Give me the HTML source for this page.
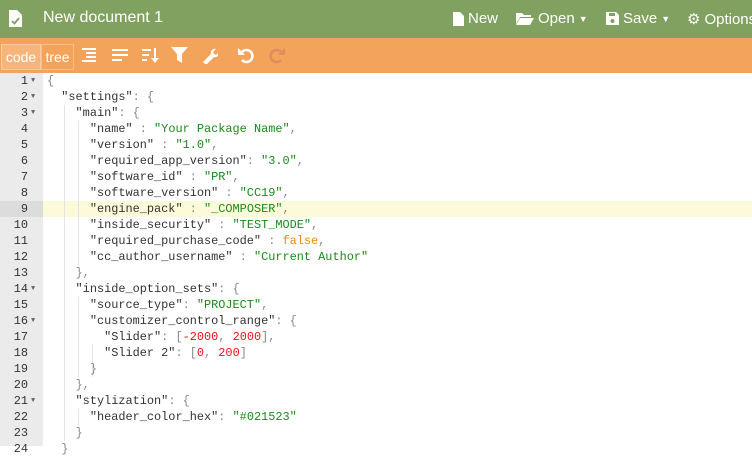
<!DOCTYPE html>
<html><head><meta charset="utf-8"><style>
*{margin:0;padding:0;box-sizing:border-box}
body{width:752px;height:446px;overflow:hidden;background:#fff;font-family:"Liberation Sans",sans-serif;position:relative}
#top{position:absolute;left:0;top:0;width:752px;height:38px;background:#80a160;color:#fff}
#top .t{position:absolute;left:43px;top:9px;font-size:16px}
#top .m{position:absolute;top:10px;font-size:15px;display:flex;align-items:center;gap:4px}
#tb{position:absolute;left:0;top:38px;width:752px;height:35px;background:#f3a35a}
.btn{position:absolute;top:6px;height:26px;border:1px solid rgba(255,255,255,.3);color:#fff;font-size:14px;line-height:24px;text-align:center}
#gut{position:absolute;left:0;top:73px;width:43px;height:373px;background:#ebebeb}
.code{position:absolute;left:0;top:73px;width:752px;font-family:"Liberation Mono",monospace;font-size:11.9px}
.ln{height:16px;line-height:16px;position:relative;white-space:pre;color:#333}
.ln .n{position:absolute;left:0;width:28px;text-align:right;color:#333}
.ln .f{position:absolute;left:31px;top:0;font-size:7px;color:#666}
.ln .c{position:absolute;left:47px}
.hl{background:linear-gradient(to right,#dcdcdc 0,#dcdcdc 43px,#fcfad9 43px)}
.s{color:#1a8a1a}.r{color:#e11}.o{color:#f08a00}.p{color:#888}
.g{position:absolute;width:1px;background:#e4e4e4}
</style></head><body>
<div id="top">
<svg style="position:absolute;left:9px;top:10px" width="13" height="17" viewBox="0 0 13 17"><path d="M0 0h8l5 5v12H0z" fill="#fff"/><path d="M3 11l2.5 2.5L10 8" stroke="#80a160" stroke-width="1.8" fill="none"/></svg>
<span class="t">New document 1</span>
<span class="m" style="left:453px"><svg width="11" height="14"><path d="M0 0h7l4 4v10H0z" fill="#fff"/></svg>New</span>
<span class="m" style="left:516px"><svg width="18" height="13"><path d="M0 1h6l2 2h7v2H4L0 12z M4 6h14l-4 7H0z" fill="#fff"/></svg>Open <span style="font-size:9px">▼</span></span>
<span class="m" style="left:606px"><svg width="13" height="13"><path d="M0 0h10l3 3v10H0z" fill="#fff"/><rect x="3" y="1" width="6" height="3" fill="#80a160"/><circle cx="6.5" cy="9" r="2" fill="#80a160"/></svg>Save <span style="font-size:9px">▼</span></span>
<span class="m" style="left:687px"><span style="font-size:15px">⚙</span>Options</span>
</div>
<div id="tb">
<div class="btn" style="left:1px;width:40px;background:rgba(255,255,255,.2)">code</div>
<div class="btn" style="left:41px;width:33px">tree</div>
<svg style="position:absolute;left:80px;top:9px" width="18" height="16" fill="#fff"><rect x="2" y="1" width="14" height="2"/><rect x="6" y="5" width="10" height="2"/><rect x="6" y="9" width="10" height="2"/><rect x="2" y="13" width="14" height="2"/></svg>
<svg style="position:absolute;left:111px;top:9px" width="18" height="16" fill="#fff"><rect x="1" y="2" width="16" height="2"/><rect x="1" y="7" width="16" height="2"/><rect x="1" y="12" width="10" height="2"/></svg>
<svg style="position:absolute;left:141px;top:9px" width="18" height="17" fill="#fff"><rect x="1" y="2" width="9" height="2"/><rect x="1" y="7" width="7" height="2"/><rect x="1" y="12" width="5" height="2"/><rect x="13" y="1" width="2" height="12"/><path d="M10 11h8l-4 5z"/></svg>
<svg style="position:absolute;left:171px;top:9px" width="17" height="17" fill="#fff"><path d="M0 0h17l-6 7v9l-5-3V7z"/></svg>
<svg style="position:absolute;left:201px;top:9px" width="17" height="17" fill="#fff"><path d="M2 15l8-8a4 4 0 015-5l-3 3 1 2 2 1 3-3a4 4 0 01-5 5l-8 8z"/></svg>
<svg style="position:absolute;left:238px;top:9px" width="17" height="17"><path d="M4 5a6 6 0 110 8" stroke="#fff" stroke-width="2.5" fill="none"/><path d="M0 1v7h7z" fill="#fff"/></svg>
<svg style="position:absolute;left:268px;top:9px" width="17" height="17" opacity=".4"><path d="M13 5a6 6 0 100 8" stroke="#c66" stroke-width="2.5" fill="none"/><path d="M17 1v7h-7z" fill="#c66"/></svg>
</div>
<div id="gut"></div>
<div style="position:absolute;left:43px;top:201px;width:709px;height:16px;background:#fcfad9"></div>
<div class="g" style="left:64px;top:105px;height:336px"></div>
<div class="g" style="left:78px;top:121px;height:144px"></div>
<div class="g" style="left:78px;top:297px;height:80px"></div>
<div class="g" style="left:92px;top:345px;height:32px"></div>
<div class="g" style="left:78px;top:409px;height:16px"></div>
<div class="code">
<div class="ln"><span class="n">1</span><span class="f">▼</span><span class="c"><span class="p">{</span></span></div>
<div class="ln"><span class="n">2</span><span class="f">▼</span><span class="c">  "settings"<span class="p">: {</span></span></div>
<div class="ln"><span class="n">3</span><span class="f">▼</span><span class="c">    "main"<span class="p">: {</span></span></div>
<div class="ln"><span class="n">4</span><span class="c">      "name" <span class="p">:</span> <span class="s">"Your Package Name"</span><span class="p">,</span></span></div>
<div class="ln"><span class="n">5</span><span class="c">      "version" <span class="p">:</span> <span class="s">"1.0"</span><span class="p">,</span></span></div>
<div class="ln"><span class="n">6</span><span class="c">      "required_app_version"<span class="p">:</span> <span class="s">"3.0"</span><span class="p">,</span></span></div>
<div class="ln"><span class="n">7</span><span class="c">      "software_id" <span class="p">:</span> <span class="s">"PR"</span><span class="p">,</span></span></div>
<div class="ln"><span class="n">8</span><span class="c">      "software_version" <span class="p">:</span> <span class="s">"CC19"</span><span class="p">,</span></span></div>
<div class="ln"><span class="n" style="background:#dcdcdc;height:16px;width:43px;padding-right:15px">9</span><span class="c">      "engine_pack" <span class="p">:</span> <span class="s">"_COMPOSER"</span><span class="p">,</span></span></div>
<div class="ln"><span class="n">10</span><span class="c">      "inside_security" <span class="p">:</span> <span class="s">"TEST_MODE"</span><span class="p">,</span></span></div>
<div class="ln"><span class="n">11</span><span class="c">      "required_purchase_code" <span class="p">:</span> <span class="o">false</span><span class="p">,</span></span></div>
<div class="ln"><span class="n">12</span><span class="c">      "cc_author_username" <span class="p">:</span> <span class="s">"Current Author"</span></span></div>
<div class="ln"><span class="n">13</span><span class="c"><span class="p">    },</span></span></div>
<div class="ln"><span class="n">14</span><span class="f">▼</span><span class="c">    "inside_option_sets"<span class="p">: {</span></span></div>
<div class="ln"><span class="n">15</span><span class="c">      "source_type"<span class="p">:</span> <span class="s">"PROJECT"</span><span class="p">,</span></span></div>
<div class="ln"><span class="n">16</span><span class="f">▼</span><span class="c">      "customizer_control_range"<span class="p">: {</span></span></div>
<div class="ln"><span class="n">17</span><span class="c">        "Slider"<span class="p">: [</span><span class="r">-2000</span><span class="p">,</span> <span class="r">2000</span><span class="p">],</span></span></div>
<div class="ln"><span class="n">18</span><span class="c">        "Slider 2"<span class="p">: [</span><span class="r">0</span><span class="p">,</span> <span class="r">200</span><span class="p">]</span></span></div>
<div class="ln"><span class="n">19</span><span class="c"><span class="p">      }</span></span></div>
<div class="ln"><span class="n">20</span><span class="c"><span class="p">    },</span></span></div>
<div class="ln"><span class="n">21</span><span class="f">▼</span><span class="c">    "stylization"<span class="p">: {</span></span></div>
<div class="ln"><span class="n">22</span><span class="c">      "header_color_hex"<span class="p">:</span> <span class="s">"#021523"</span></span></div>
<div class="ln"><span class="n">23</span><span class="c"><span class="p">    }</span></span></div>
<div class="ln"><span class="n">24</span><span class="c"><span class="p">  }</span></span></div>
</div>
</body></html>
